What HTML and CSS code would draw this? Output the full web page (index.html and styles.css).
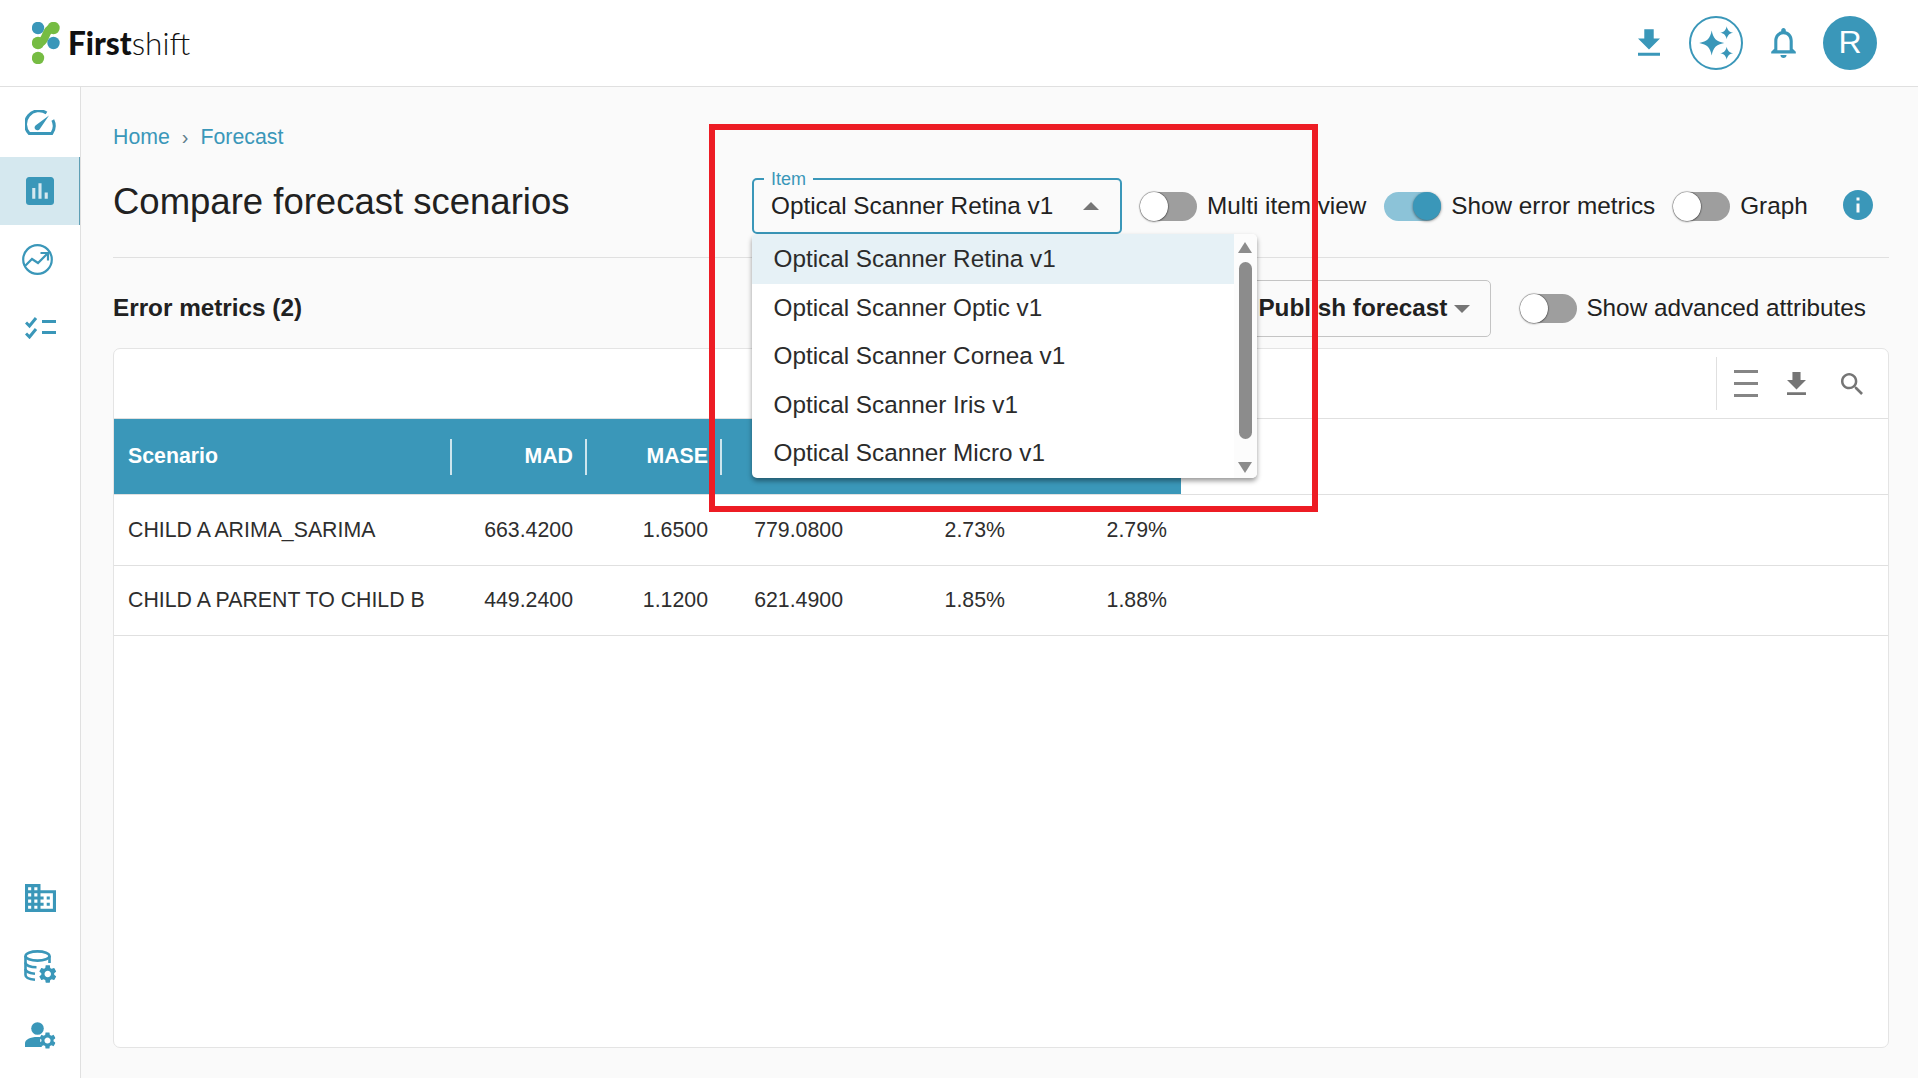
FILE: index.html
```html
<!DOCTYPE html>
<html lang="en">
<head>
<meta charset="utf-8">
<title>Compare forecast scenarios</title>
<link rel="stylesheet" href="styles.css">
</head>
<body>
<svg class="defs" width="0" height="0">
  <symbol id="gear" viewBox="2.5 2 19 20"><path d="M19.14 12.94c.04-.3.06-.61.06-.94 0-.32-.02-.64-.07-.94l2.03-1.58c.18-.14.23-.41.12-.61l-1.92-3.32c-.12-.22-.37-.29-.59-.22l-2.39.96c-.5-.38-1.03-.7-1.62-.94l-.36-2.54c-.04-.24-.24-.41-.48-.41h-3.84c-.24 0-.43.17-.47.41l-.36 2.54c-.59.24-1.13.57-1.62.94l-2.39-.96c-.22-.08-.47 0-.59.22L2.74 8.87c-.12.21-.08.47.12.61l2.03 1.58c-.05.3-.09.63-.09.94s.02.64.07.94l-2.03 1.58c-.18.14-.23.41-.12.61l1.92 3.32c.12.22.37.29.59.22l2.39-.96c.5.38 1.03.7 1.62.94l.36 2.54c.05.24.24.41.48.41h3.84c.24 0 .44-.17.47-.41l.36-2.54c.59-.24 1.13-.56 1.62-.94l2.39.96c.22.08.47 0 .59-.22l1.92-3.32c.12-.22.07-.47-.12-.61l-2.01-1.58zM12 15.6c-1.98 0-3.6-1.62-3.6-3.6s1.62-3.6 3.6-3.6 3.6 1.62 3.6 3.6-1.62 3.6-3.6 3.6z"/></symbol>
  <symbol id="dl" viewBox="5 3 14 17"><path d="M19 9h-4V3H9v6H5l7 7 7-7zM5 18v2h14v-2H5z"/></symbol>
</svg>

<header class="topbar">
  <div class="brand">
    <svg class="logo" viewBox="0 0 28 42" width="28" height="42">
      <path class="logo-link" d="M21.5 6C12 6 15.500 21 6 21"/>
      <circle class="logo-blue" cx="6" cy="6" r="6.200"/>
      <circle class="logo-green" cx="21.5" cy="6" r="6.200"/>
      <circle class="logo-blue" cx="21.5" cy="21" r="6.200"/>
      <circle class="logo-green" cx="6" cy="21" r="6.200"/>
      <circle class="logo-green" cx="6" cy="36" r="6.200"/>
    </svg>
    <span class="wordmark"><b>First</b><span>shift</span></span>
  </div>
  <div class="top-actions">
    <div class="top-cell"><svg class="teal" width="22" height="27"><use href="#dl"/></svg></div>
    <div class="top-cell">
      <svg class="teal" viewBox="0 0 54 54" width="54" height="54">
        <circle class="ring" cx="27" cy="27" r="26"/>
        <path d="M22.7 14.500c1.500 8 4.500 11 12.500 12.500-8 1.500-11 4.500-12.500 12.500-1.500-8-4.500-11-12.500-12.500 8-1.500 11-4.500 12.500-12.500z"/>
        <path d="M37.700 10.200c.8 4 2.500 5.700 6.500 6.500-4 .8-5.700 2.500-6.500 6.500-.8-4-2.500-5.700-6.500-6.500 4-.8 5.700-2.500 6.500-6.500z"/>
        <path d="M37.700 30.800c.8 4 2.500 5.700 6.500 6.500-4 .8-5.700 2.500-6.500 6.500-.8-4-2.500-5.700-6.500-6.500 4-.8 5.700-2.500 6.500-6.500z"/>
      </svg>
    </div>
    <div class="top-cell">
      <svg class="teal" viewBox="4 2.500 16 19.500" width="25" height="30"><path d="M12 22c1.100 0 2-.9 2-2h-4c0 1.100.9 2 2 2zm6-6v-5c0-3.070-1.630-5.640-4.500-6.320V4c0-.83-.67-1.500-1.500-1.500s-1.500.67-1.500 1.500v.68C7.640 5.360 6 7.920 6 11v5l-2 2v1h16v-1l-2-2zm-2 1H8v-6c0-2.480 1.510-4.500 4-4.500s4 2.020 4 4.500v6z"/></svg>
    </div>
    <div class="avatar">R</div>
  </div>
</header>

<div class="shell">
  <nav class="sidebar">
    <div class="nav-item nav-gauge">
      <svg class="line-icon heavy" viewBox="0 0 31 25" width="31" height="25">
        <path d="M21.500 3A13.500 13.500 0 0 0 4.200 23.500H26.800A13.500 13.500 0 0 0 27.800 10"/>
        <path class="solid" d="M24 5.500 14.800 18.900a2.800 2.800 0 1 1-4-3.700z"/>
      </svg>
    </div>
    <div class="nav-item nav-active">
      <svg class="teal" viewBox="3 3 18 18" width="28" height="28"><path d="M19 3H5c-1.100 0-2 .9-2 2v14c0 1.100.9 2 2 2h14c1.100 0 2-.9 2-2V5c0-1.100-.9-2-2-2zM9 17H7v-7h2v7zm4 0h-2V7h2v10zm4 0h-2v-4h2v4z"/></svg>
    </div>
    <div class="nav-item">
      <svg class="line-icon slim icon-left" viewBox="0 0 31 31" width="31" height="31">
        <circle cx="15.500" cy="15.500" r="14.300"/>
        <path d="M2.500 22.500 10 15l6 4L25 10"/>
        <path d="M18.500 9H26V16.500"/>
      </svg>
    </div>
    <div class="nav-item">
      <svg class="line-icon thick" viewBox="0 0 31 23" width="31" height="23">
        <path d="M1 6.500 4.500 10 11 2"/>
        <path d="M1 17.500 4.500 21 11 13"/>
        <path d="M17 5.500H31M17 16.500H31"/>
      </svg>
    </div>
    <div class="nav-bottom">
      <div class="nav-item nav-low">
        <svg class="teal" viewBox="2 3 20 18" width="31" height="28"><path d="M12 7V3H2v18h20V7H12zM6 19H4v-2h2v2zm0-4H4v-2h2v2zm0-4H4V9h2v2zm0-4H4V5h2v2zm4 12H8v-2h2v2zm0-4H8v-2h2v2zm0-4H8V9h2v2zm0-4H8V5h2v2zm10 12h-8v-2h2v-2h-2v-2h2v-2h-2V9h8v10zm-2-8h-2v2h2v-2zm0 4h-2v2h2v-2z"/></svg>
      </div>
      <div class="nav-item nav-low">
        <svg class="line-icon" viewBox="0 0 33 33" width="33" height="33">
          <ellipse cx="13.500" cy="6" rx="12" ry="4.600"/>
          <path d="M1.500 6v19c0 2.500 4 4.300 9.500 4.700M25.500 6v7"/>
          <path d="M1.500 12.500c0 2.800 5 4.800 11 4.800M1.500 19c0 2.500 4.500 4.300 9.500 4.700"/>
          <use class="solid" href="#gear" x="15" y="15" width="17.500" height="18"/>
        </svg>
      </div>
      <div class="nav-item nav-low">
        <svg class="teal" viewBox="0 0 31 27" width="31" height="27">
          <circle cx="12.500" cy="6.500" r="6.300"/>
          <path d="M0 25v-3.500c0-4 5-6.500 12.500-6.500 1.200 0 2.200.1 3.200.2-1 2.700-.6 6.800 1.300 9.800z"/>
          <use href="#gear" x="14.500" y="10" width="16" height="17"/>
        </svg>
      </div>
    </div>
  </nav>

  <main class="content">
    <div class="crumbs"><a>Home</a><span class="crumb-sep">›</span><a>Forecast</a></div>

    <section class="title-row">
      <h1 class="page-title">Compare forecast scenarios</h1>
      <div class="select">
        <span class="select-label">Item</span>
        <span class="select-value">Optical Scanner Retina v1</span>
        <span class="caret-up"></span>
        <div class="menu">
          <ul class="menu-list">
            <li class="menu-on">Optical Scanner Retina v1</li>
            <li>Optical Scanner Optic v1</li>
            <li>Optical Scanner Cornea v1</li>
            <li>Optical Scanner Iris v1</li>
            <li>Optical Scanner Micro v1</li>
          </ul>
          <div class="scroll">
            <span class="scroll-up"></span>
            <span class="scroll-thumb"></span>
            <span class="scroll-down"></span>
          </div>
        </div>
      </div>
      <label class="switch"><span class="track"><span class="thumb"></span></span>Multi item view</label>
      <label class="switch"><span class="track track-on"><span class="thumb"></span></span>Show error metrics</label>
      <label class="switch"><span class="track"><span class="thumb"></span></span>Graph</label>
      <svg class="teal info" viewBox="2 2 20 20" width="30" height="30"><path d="M12 2C6.480 2 2 6.480 2 12s4.480 10 10 10 10-4.480 10-10S17.520 2 12 2zm1 15h-2v-6h2v6zm0-8h-2V7h2v2z"/></svg>
    </section>

    <section class="metrics-row">
      <h2 class="metrics-title">Error metrics (2)</h2>
      <button class="publish">Publish forecast<span class="caret-down"></span></button>
      <label class="switch"><span class="track"><span class="thumb"></span></span>Show advanced attributes</label>
    </section>

    <section class="card">
      <div class="toolbar">
        <div class="tools">
          <span class="burger"><i></i><i></i><i></i></span>
          <svg class="gray" width="19" height="23"><use href="#dl"/></svg>
          <svg class="gray" viewBox="3 3 17.500 17.500" width="22" height="22"><path d="M15.500 14h-.79l-.28-.27C15.410 12.590 16 11.110 16 9.500 16 5.910 13.090 3 9.500 3S3 5.910 3 9.500 5.910 16 9.500 16c1.610 0 3.090-.59 4.230-1.570l.27.280v.79l5 4.990L20.490 19l-4.990-5zm-6 0C7.010 14 5 11.990 5 9.500S7.010 5 9.500 5 14 7.010 14 9.500 11.990 14 9.500 14z"/></svg>
        </div>
      </div>
      <div class="row row-head">
        <div class="cell head left sep">Scenario</div>
        <div class="cell head sep">MAD</div>
        <div class="cell head sep">MASE</div>
        <div class="cell head"></div>
        <div class="cell head"></div>
        <div class="cell head"></div>
      </div>
      <div class="row row-one">
        <div class="cell left">CHILD A ARIMA_SARIMA</div>
        <div class="cell">663.4200</div>
        <div class="cell">1.6500</div>
        <div class="cell">779.0800</div>
        <div class="cell">2.73%</div>
        <div class="cell">2.79%</div>
      </div>
      <div class="row row-two">
        <div class="cell left">CHILD A PARENT TO CHILD B</div>
        <div class="cell">449.2400</div>
        <div class="cell">1.1200</div>
        <div class="cell">621.4900</div>
        <div class="cell">1.85%</div>
        <div class="cell">1.88%</div>
      </div>
    </section>
  </main>
</div>

<div class="callout"></div>
</body>
</html>
```

FILE: styles.css
```css
* { box-sizing: border-box; }
html, body { height: 100%; }
body {
  margin: 0;
  height: 1078px;
  overflow: hidden;
  display: flex;
  flex-direction: column;
  position: relative;
  font-family: "Liberation Sans", Arial, sans-serif;
  color: #212121;
  background: #fafafa;
}
.defs { position: absolute; }
.teal { fill: #3a97b9; display: block; }
.gray { fill: #757575; display: block; }

/* top bar */
.topbar {
  height: 87px;
  flex: none;
  display: flex;
  align-items: center;
  justify-content: space-between;
  padding: 0 41px 1px 32px;
  background: #fff;
  border-bottom: 1px solid #e0e0e0;
}
.brand { display: flex; align-items: center; gap: 8px; }
.logo { display: block; }
.logo-blue { fill: #3a97b9; }
.logo-green { fill: #76bc43; }
.logo-link { fill: none; stroke: #76bc43; stroke-width: 8; }
.wordmark { font-family: Lato, sans-serif; font-size: 31.5px; color: #111; font-weight: 300; line-height: 40px; }
.wordmark b { font-weight: 900; }
.top-actions { display: flex; align-items: center; gap: 13px; }
.top-cell { width: 54px; height: 54px; display: flex; align-items: center; justify-content: center; }
.ring { fill: none; stroke: #3a97b9; stroke-width: 2; }
.avatar {
  width: 54px; height: 54px; border-radius: 50%;
  background: #3a97b9; color: #fff;
  display: flex; align-items: center; justify-content: center;
  font-size: 32px;
}

/* layout */
.shell { flex: 1; display: flex; min-height: 0; }
.sidebar {
  width: 81px; flex: none;
  display: flex; flex-direction: column;
  padding-top: 2px;
  background: #fff;
  border-right: 1px solid #e0e0e0;
}
.nav-item { height: 68px; display: flex; align-items: center; justify-content: center; flex: none; }
.nav-gauge { padding-bottom: 2px; }
.nav-low { height: 69px; }
.nav-active { background: #d5e8ef; box-shadow: inset -1px 0 0 #5f9fb5; }
.nav-bottom { margin-top: auto; padding-bottom: 8px; }
.line-icon { fill: none; stroke: #3a97b9; stroke-width: 2.6; display: block; }
.line-icon.thick { stroke-width: 3; }
.line-icon.heavy { stroke-width: 3; }
.line-icon.slim { stroke-width: 2.2; }
.line-icon .solid { fill: #3a97b9; stroke: none; }
.icon-left { margin-right: 5px; }

.content {
  flex: 1; min-width: 0;
  display: flex; flex-direction: column;
  padding: 38px 29px 30px 32px;
}
.crumbs { font-size: 21.3px; line-height: 24px; color: #3a97b9; display: flex; gap: 12px; margin-bottom: 29px; }
.crumb-sep { color: #607d8b; font-size: 20px; }

/* title row */
.title-row {
  display: flex; align-items: center;
  padding-bottom: 23px;
  border-bottom: 1px solid #e0e0e0;
  height: 80px;
  flex: none;
}
.page-title {
  width: 639px; flex: none; margin: 0 0 8px;
  font-size: 36.5px; font-weight: 400; line-height: 44px;
}
.select {
  width: 370px; height: 56px; flex: none;
  position: relative;
  border: 2px solid #3a97b9; border-radius: 5px;
  display: flex; align-items: center; justify-content: space-between;
  padding: 0 21px 0 17px;
  font-size: 24.3px;
}
.select-label {
  position: absolute; left: 10px; top: -11px;
  padding: 0 7px; background: #fafafa;
  color: #3a97b9; font-size: 18px; line-height: 20px;
}
.caret-up { width: 0; height: 0; border: 8px solid transparent; border-top: 0; border-bottom: 8px solid #757575; }
.caret-down { display: inline-block; width: 0; height: 0; margin-left: 7px; vertical-align: 3px; border: 8px solid transparent; border-bottom: 0; border-top: 8px solid #757575; }
.menu {
  position: absolute; left: -2px; top: 54px; z-index: 5;
  width: 505px; height: 244px;
  display: flex;
  background: #fff; border-radius: 5px;
  box-shadow: 0 3px 5px rgba(0,0,0,.4);
  overflow: hidden;
}
.menu-list { list-style: none; margin: 0; padding: 0; width: 482px; flex: none; }
.menu-list li { height: 48.5px; padding: 0 0 1px 21.5px; display: flex; align-items: center; color: #2b2b2b; }
.menu-list li.menu-on { height: 50px; padding-bottom: 1px; background: #e6f1f6; }
.scroll { width: 23px; flex: none; background: #fcfcfc; display: flex; flex-direction: column; align-items: center; padding: 8px 1px 0 0; }
.scroll-up { width: 0; height: 0; border: 7px solid transparent; border-top: 0; border-bottom: 11px solid #8c8c8c; margin-bottom: 9px; }
.scroll-thumb { width: 13px; height: 177px; border-radius: 7px; background: #8c8c8c; margin-bottom: 23px; flex: none; }
.scroll-down { width: 0; height: 0; border: 7px solid transparent; border-bottom: 0; border-top: 11px solid #8c8c8c; }

.switch { display: flex; align-items: center; gap: 10px; font-size: 24.3px; margin-left: 18px; white-space: nowrap; }
.track { width: 57px; height: 29px; border-radius: 15px; background: #9e9e9e; display: flex; flex: none; }
.thumb { width: 28px; height: 29px; border-radius: 50%; background: #fff; box-shadow: 0 0 1px .5px rgba(0,0,0,.45), 0 1px 2px rgba(0,0,0,.3); }
.track-on { background: #8cc3d8; justify-content: flex-end; }
.track-on .thumb { background: #3a97b9; width: 28px; height: 28px; margin-top: .5px; box-shadow: 0 1px 3px rgba(0,0,0,.5); }
.info { margin-left: 35px; margin-bottom: 2px; flex: none; }

/* metrics row */
.metrics-row { height: 57px; margin-top: 22px; display: flex; align-items: center; flex: none; }
.metrics-title { margin: 0 0 2px; font-size: 24.3px; font-weight: 700; }
.publish {
  margin-left: auto;
  width: 270px; height: 57px;
  border: 1px solid #c4c4c4; border-radius: 5px;
  background: transparent;
  font: 700 24.3px "Liberation Sans", Arial, sans-serif;
  color: #212121;
  text-align: right; padding: 0 20px 2px 0;
  white-space: nowrap;
}
.metrics-row .switch { margin-left: 29px; margin-right: 23px; gap: 9px; padding-bottom: 1px; }

/* card */
.card {
  margin-top: 11px; flex: 1;
  background: #fff;
  border: 1px solid #e4e4e4; border-radius: 7px;
  overflow: hidden;
}
.toolbar { height: 70px; display: flex; align-items: center; justify-content: flex-end; border-bottom: 1px solid #e0e0e0; }
.tools { height: 53px; display: flex; align-items: center; border-left: 1px solid #e0e0e0; padding: 0 25px 0 17px; gap: 29px; }
.tools svg:last-child { margin-left: 6px; }
.burger { width: 24px; display: flex; flex-direction: column; gap: 9px; }
.burger i { display: block; height: 3px; background: #858585; }

.row {
  display: grid;
  grid-template-columns: 338px 135px 135px 135px 162px 162px;
  border-bottom: 1px solid #e0e0e0;
}
.row-head { height: 76px; }
.row-one { height: 71px; }
.row-two { height: 70px; }
.cell {
  display: flex; align-items: center; justify-content: flex-end;
  padding: 0 14px;
  font-size: 21.3px; color: #2e2e2e;
  position: relative;
}
.cell.left { justify-content: flex-start; }
.head { background: #3a97b9; color: #fff; font-weight: 700; padding-bottom: 1px; }
.row-two .cell { padding-bottom: 1px; }
.sep::after {
  content: ""; position: absolute; right: 0; top: 20px;
  width: 2px; height: 36px; background: rgba(255,255,255,.75);
}

/* annotation laid over the shot */
.callout {
  position: absolute; left: 709px; top: 124px;
  width: 609px; height: 388px;
  border: 6.5px solid #ed1c24;
  z-index: 10;
  pointer-events: none;
}
```
